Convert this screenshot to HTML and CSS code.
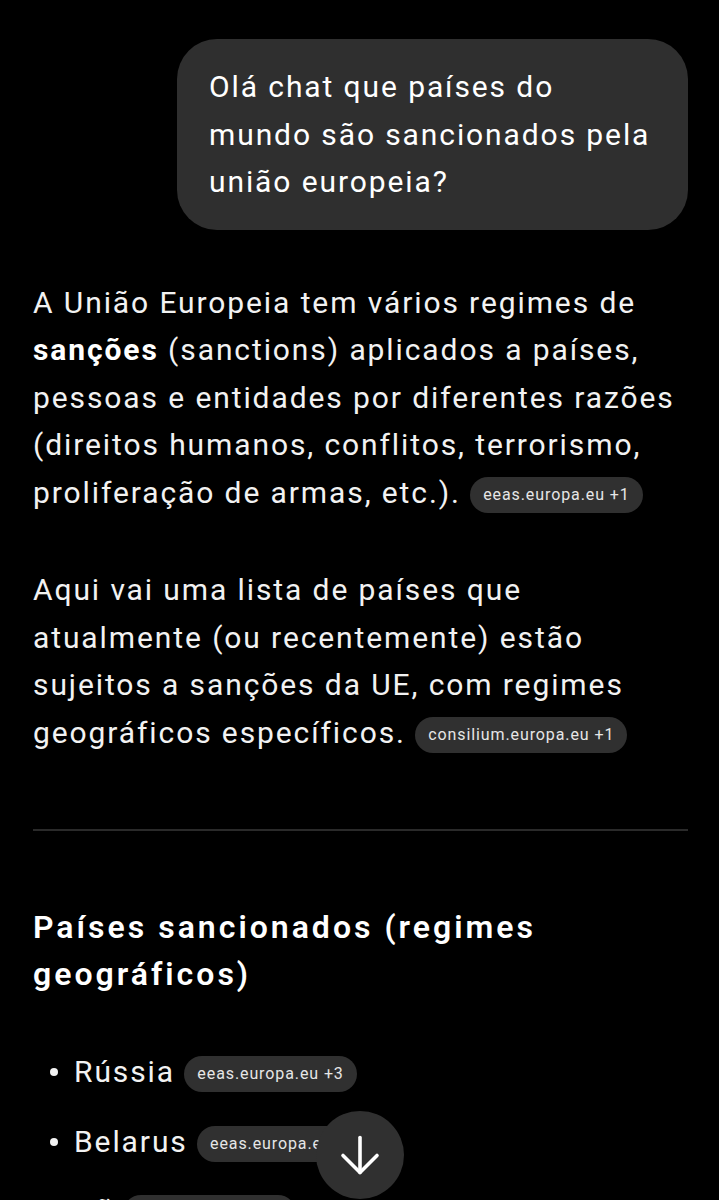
FILE: index.html
```html
<!DOCTYPE html>
<html lang="pt">
<head>
    <meta charset="UTF-8">
    <meta name="viewport" content="width=device-width, initial-scale=1.0">
    <title>Conversa</title>
    <link rel="stylesheet" href="styles.css">
</head>
<body>
    <main class="chat">
        <div class="user-row">
            <div class="user-bubble">Olá chat que países do mundo são sancionados pela união europeia?</div>
        </div>

        <div class="answer">
            <p>A União Europeia tem vários regimes de <strong>sanções</strong> (sanctions) aplicados a países, pessoas e entidades por diferentes razões (direitos humanos, conflitos, terrorismo, proliferação de armas, etc.). <span class="source">eeas.europa.eu +1</span></p>

            <p>Aqui vai uma lista de países que atualmente (ou recentemente) estão sujeitos a sanções da UE, com regimes geográficos específicos. <span class="source">consilium.europa.eu +1</span></p>

            <hr class="divider">

            <h3>Países sancionados (regimes geográficos)</h3>

            <ul class="country-list">
                <li>Rússia <span class="source">eeas.europa.eu +3</span></li>
                <li>Belarus <span class="source">eeas.europa.eu +2</span></li>
                <li>Irã <span class="source">eeas.europa.eu +1</span></li>
            </ul>
        </div>
    </main>

    <button class="scroll-down" type="button" aria-label="Rolar para baixo">
        <svg width="48" height="48" viewBox="0 0 24 24" fill="none" stroke="currentColor" stroke-width="1.8" stroke-linecap="round" stroke-linejoin="round">
            <path d="M12 3.25v17.5"/>
            <path d="M3.5 12.25L12 20.75l8.5-8.5"/>
        </svg>
    </button>
</body>
</html>
```

FILE: styles.css
```css
* {
    margin: 0;
    padding: 0;
    box-sizing: border-box;
}

body {
    background-color: #000000;
    color: #f2f2f2;
    font-family: Roboto, 'Noto Sans', sans-serif;
    font-size: 30px;
    letter-spacing: 1.9px;
    line-height: 47.5px;
    overflow: hidden;
}

.chat {
    padding: 39px 31px 0 33px;
}

.user-row {
    display: flex;
    justify-content: flex-end;
    margin-bottom: 49px;
}

.user-bubble {
    width: 511px;
    padding: 24px 30px 24px 32px;
    background-color: #2f2f2f;
    border-radius: 40px;
    color: #ffffff;
}

.answer p {
    margin-bottom: 50px;
}

.answer strong {
    font-weight: 700;
    color: #ffffff;
}

.source {
    display: inline-block;
    height: 36px;
    line-height: 36px;
    padding: 0 13px;
    border-radius: 18px;
    background-color: #303030;
    color: #e6e6e6;
    font-size: 16px;
    letter-spacing: 0.9px;
    vertical-align: 3px;
    white-space: nowrap;
}

/* p margin (50px) collapses into this one */
.divider {
    border: none;
    height: 2px;
    background-color: #2a2a2a;
    margin: 73px 0 73px;
}

h3 {
    font-size: 32px;
    font-weight: 600;
    letter-spacing: 3px;
    line-height: 47px;
    color: #ffffff;
    margin-bottom: 50px;
}

.country-list {
    list-style: none;
}

.country-list li {
    position: relative;
    padding-left: 41px;
    margin-bottom: 22px;
}

.country-list li::before {
    content: '';
    position: absolute;
    left: 17px;
    top: 20px;
    width: 8px;
    height: 8px;
    border-radius: 50%;
    background-color: #f2f2f2;
}

.scroll-down {
    position: fixed;
    left: 316px;
    top: 1111px;
    width: 88px;
    height: 88px;
    border: none;
    border-radius: 50%;
    background-color: #303030;
    color: #ffffff;
    display: flex;
    align-items: center;
    justify-content: center;
}
```
